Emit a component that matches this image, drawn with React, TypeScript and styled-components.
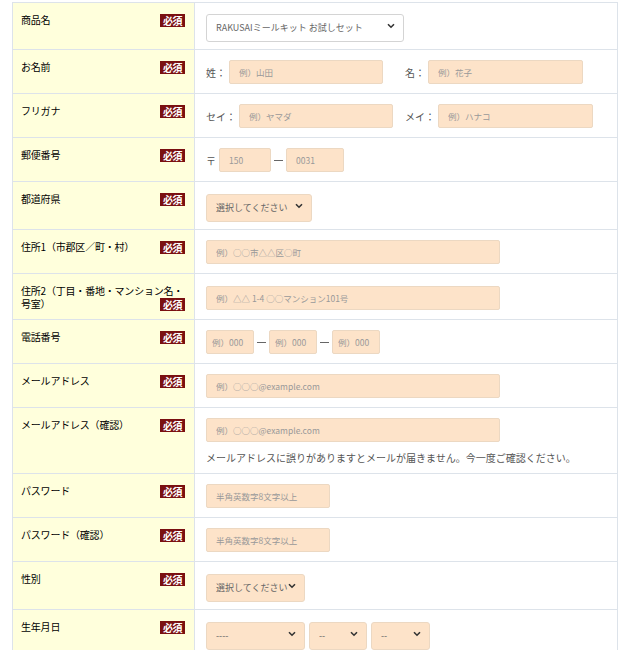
import React from "react";
import styled, { createGlobalStyle } from "styled-components";

const GlobalStyle = createGlobalStyle`
  html, body {
    margin: 0;
    padding: 0;
    background: #ffffff;
    font-family: "Noto Sans CJK JP", "Liberation Sans", sans-serif;
  }
`;

const Page = styled.div`
  width: 626px;
  height: 650px;
  overflow: hidden;
  padding: 2px 0 0 12px;
  box-sizing: border-box;
`;

const Table = styled.div`
  width: 606px;
  border: 1px solid #dde3ea;
  border-bottom: none;
  box-sizing: border-box;
`;

const Row = styled.div`
  display: grid;
  grid-template-columns: 182px 1fr;
  border-bottom: 1px solid #dde3ea;
`;

const Label = styled.div`
  background: #ffffdc;
  border-right: 1px solid #dde3ea;
  padding: 10px 9px 6px 8px;
  font-size: 10px;
  line-height: 13px;
  letter-spacing: -0.2px;
  color: #000;
  font-weight: 400;
`;

const Badge = styled.span`
  float: right;
  margin-top: 1px;
  width: 25px;
  height: 13px;
  background: #7a1011;
  color: #fff;
  font-size: 10px;
  line-height: 13px;
  font-weight: 700;
  text-align: center;
  letter-spacing: -0.5px;
`;

const Cell = styled.div<{ $pt?: number }>`
  padding: ${(p) => p.$pt ?? 10}px 10px 9px 11px;
  display: flex;
  flex-direction: column;
  align-items: flex-start;
`;

const Line = styled.div`
  display: flex;
  align-items: center;
`;

const Caption = styled.span<{ $ml?: number }>`
  font-size: 10px;
  color: #555;
  margin-left: ${(p) => p.$ml ?? 0}px;
  margin-right: 3px;
  white-space: nowrap;
`;

const Dash = styled.span`
  width: 9px;
  height: 1px;
  background: #666;
  margin: 0 3px;
`;

const Input = styled.input<{ $w: number; $px?: number }>`
  width: ${(p) => p.$w}px;
  height: 24px;
  box-sizing: border-box;
  margin: 0;
  padding: 0 ${(p) => p.$px ?? 9}px;
  background: #fde3c9;
  border: 1px solid #ecd8c2;
  border-radius: 2px;
  font-family: inherit;
  font-size: 8.5px;
  color: #555;
  outline: none;
  &::placeholder {
    color: #999;
  }
`;

const SelectWrap = styled.div<{ $w: number; $mr?: number }>`
  position: relative;
  width: ${(p) => p.$w}px;
  height: 28px;
  margin-right: ${(p) => p.$mr ?? 0}px;
`;

const Select = styled.select<{ $plain?: boolean }>`
  appearance: none;
  width: 100%;
  height: 100%;
  box-sizing: border-box;
  margin: 0;
  padding: 0 9px;
  background: ${(p) => (p.$plain ? "#ffffff" : "#fde3c9")};
  border: 1px solid ${(p) => (p.$plain ? "#d4d4d4" : "#ecd8c2")};
  border-radius: 3px;
  font-family: inherit;
  font-size: 9px;
  color: #666;
  outline: none;
`;

const Chevron = styled.svg`
  position: absolute;
  right: 9px;
  top: 11px;
  width: 8px;
  height: 6px;
  pointer-events: none;
`;

const Note = styled.p`
  margin: 9px 0 0;
  font-size: 10px;
  line-height: 13px;
  color: #555;
`;

const Arrow = () => (
  <Chevron viewBox="0 0 8 6">
    <path d="M1 1.2 L4 4.2 L7 1.2" fill="none" stroke="#333" strokeWidth="1.6" />
  </Chevron>
);

type DropProps = {
  w: number;
  mr?: number;
  plain?: boolean;
  value: string;
};

const Drop: React.FC<DropProps> = ({ w, mr, plain, value }) => (
  <SelectWrap $w={w} $mr={mr}>
    <Select $plain={plain} defaultValue={value}>
      <option>{value}</option>
    </Select>
    <Arrow />
  </SelectWrap>
);

const Required: React.FC<{ text: string }> = ({ text }) => (
  <Label>
    {text}
    <Badge>必須</Badge>
  </Label>
);

export default function App() {
  return (
    <Page>
      <GlobalStyle />
      <Table>
        <Row>
          <Required text="商品名" />
          <Cell $pt={9}>
            <Drop w={198} plain value="RAKUSAIミールキット お試しセット" />
          </Cell>
        </Row>
        <Row>
          <Required text="お名前" />
          <Cell>
            <Line>
              <Caption>姓：</Caption>
              <Input $w={154} placeholder="例）山田" />
              <Caption $ml={22}>名：</Caption>
              <Input $w={155} placeholder="例）花子" />
            </Line>
          </Cell>
        </Row>
        <Row>
          <Required text="フリガナ" />
          <Cell>
            <Line>
              <Caption>セイ：</Caption>
              <Input $w={154} placeholder="例）ヤマダ" />
              <Caption $ml={12}>メイ：</Caption>
              <Input $w={155} placeholder="例）ハナコ" />
            </Line>
          </Cell>
        </Row>
        <Row>
          <Required text="郵便番号" />
          <Cell>
            <Line>
              <Caption>〒</Caption>
              <Input $w={52} placeholder="150" />
              <Dash />
              <Input $w={58} placeholder="0031" />
            </Line>
          </Cell>
        </Row>
        <Row>
          <Required text="都道府県" />
          <Cell>
            <Drop w={106} value="選択してください" />
          </Cell>
        </Row>
        <Row>
          <Required text="住所1（市郡区／町・村）" />
          <Cell>
            <Input $w={294} placeholder="例）○○市△△区○町" />
          </Cell>
        </Row>
        <Row>
          <Required text="住所2（丁目・番地・マンション名・号室）" />
          <Cell $pt={12}>
            <Input $w={294} placeholder="例）△△ 1-4 ○○マンション101号" />
          </Cell>
        </Row>
        <Row>
          <Required text="電話番号" />
          <Cell>
            <Line>
              <Input $w={48} $px={5} placeholder="例）000" />
              <Dash />
              <Input $w={48} $px={5} placeholder="例）000" />
              <Dash />
              <Input $w={48} $px={5} placeholder="例）000" />
            </Line>
          </Cell>
        </Row>
        <Row>
          <Required text="メールアドレス" />
          <Cell>
            <Input $w={294} placeholder="例）○○○@example.com" />
          </Cell>
        </Row>
        <Row>
          <Required text="メールアドレス（確認）" />
          <Cell>
            <Input $w={294} placeholder="例）○○○@example.com" />
            <Note>
              メールアドレスに誤りがありますとメールが届きません。今一度ご確認ください。
            </Note>
          </Cell>
        </Row>
        <Row>
          <Required text="パスワード" />
          <Cell>
            <Input $w={124} type="password" placeholder="半角英数字8文字以上" />
          </Cell>
        </Row>
        <Row>
          <Required text="パスワード（確認）" />
          <Cell>
            <Input $w={124} type="password" placeholder="半角英数字8文字以上" />
          </Cell>
        </Row>
        <Row>
          <Required text="性別" />
          <Cell>
            <Drop w={99} value="選択してください" />
          </Cell>
        </Row>
        <Row>
          <Required text="生年月日" />
          <Cell>
            <Line>
              <Drop w={99} mr={4} value="----" />
              <Drop w={58} mr={4} value="--" />
              <Drop w={59} value="--" />
            </Line>
          </Cell>
        </Row>
      </Table>
    </Page>
  );
}
